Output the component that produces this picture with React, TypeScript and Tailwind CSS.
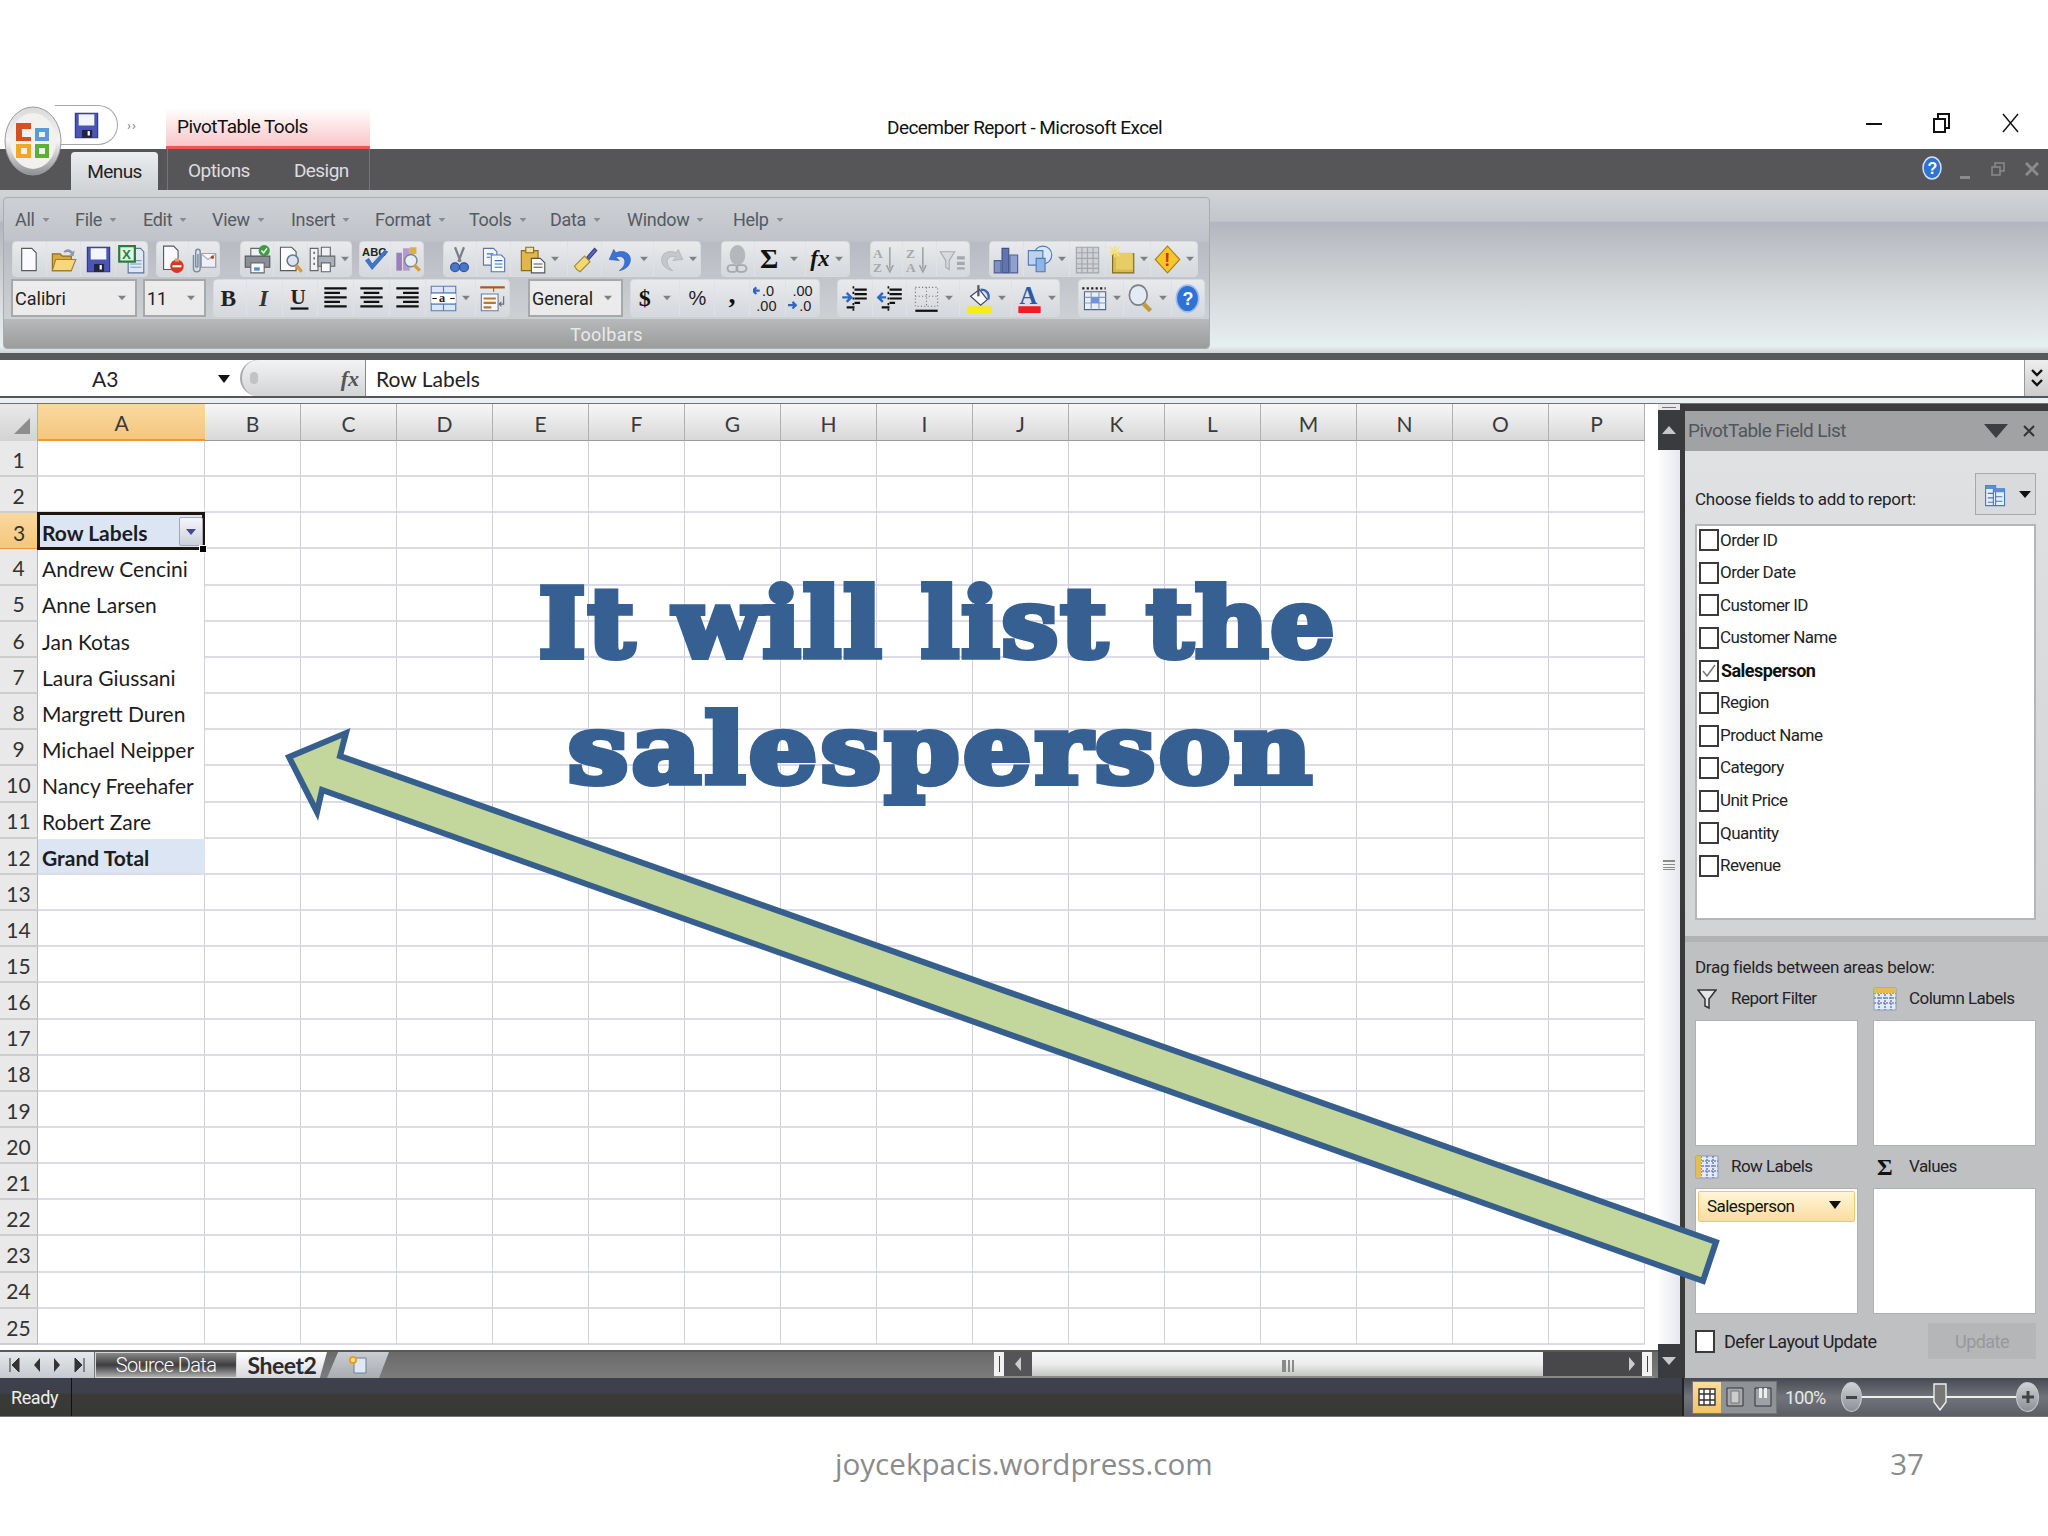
import type { ReactNode } from "react";

const Caret = ({ color = "#7d8085" }: { color?: string }) => (
  <svg width="10" height="6" viewBox="0 0 10 6" className="shrink-0">
    <path d="M0.5 0.5h9L5 5.5z" fill={color} stroke="#e8e8e8" strokeWidth="0.5" />
  </svg>
);

const S = ({ children }: { children: ReactNode }) => (
  <svg width="29" height="29" viewBox="0 0 26 26" className="shrink-0">
    {children}
  </svg>
);

const Doc = ({ x = 6, y = 3, w = 13, h = 20 }: { x?: number; y?: number; w?: number; h?: number }) => (
  <path d={`M${x} ${y}h${w - 4}l4 4v${h - 4}h-${w}z`} fill="#fbfbfd" stroke="#56595e" strokeWidth="1" />
);

const Lines = ({ d }: { d: string }) => <path d={d} stroke="#111" strokeWidth="2" fill="none" />;

const icons: Record<string, ReactNode> = {
  new: <Doc />,
  open: (
    <>
      <path d="M3 8h7l2 2h8v13H3z" fill="#d9a93c" stroke="#8a6a1e" />
      <path d="M6 13h18l-4 10H3z" fill="#f7d77e" stroke="#a47f26" />
      <path d="M13 6c2-3 6-3 8 0l2-1-1 5-4-1 2-1c-2-2-4-2-6-1z" fill="#8c97a8" />
    </>
  ),
  save: (
    <>
      <path d="M3 2h20v22H3z" fill="#4a55b5" stroke="#2c3380" />
      <path d="M6 3h14v10H6z" fill="#f4f5fb" />
      <path d="M9 17h9v7H9z" fill="#20243e" />
      <path d="M14 18h2v4h-2z" fill="#fff" />
    </>
  ),
  excel: (
    <>
      <path d="M10 3h11l3 3v19H10z" fill="#dfe8f5" stroke="#5674a5" />
      <path d="M12 14h10M12 17h10M12 20h10" stroke="#7f9bc6" />
      <path d="M2 1h14v14H2z" fill="#e7f4e4" stroke="#23803a" strokeWidth="2" />
      <text x="4.5" y="12.5" fontFamily="Liberation Sans" fontWeight="700" fontSize="12" fill="#1c8a3a">X</text>
    </>
  ),
  perm: (
    <>
      <Doc x={5} y={1} h={21} />
      <circle cx="17" cy="19" r="6" fill="#d23a22" />
      <path d="M13 18h8v2h-8z" fill="#fff" />
      <path d="M15 12h4v3h-4z" fill="#d0a078" />
    </>
  ),
  attach: (
    <>
      <path d="M11 8h13v12H11z" fill="#eef0f7" stroke="#8a90a4" />
      <path d="M11 8l6 5 7-5" fill="#f7f7fb" stroke="#a7acbb" />
      <circle cx="21" cy="11" r="1.5" fill="#d23a22" />
      <path d="M4 9v12c0 4 6 4 6 0V6c0-3-4-3-4 0v13c0 1 2 1 2 0V8" fill="none" stroke="#7d8aa0" strokeWidth="1.3" />
    </>
  ),
  print: (
    <>
      <path d="M7 3h11v8H7z" fill="#eef1f7" stroke="#666" />
      <path d="M2 10h22v10H2z" fill="#8a8f9a" stroke="#555" />
      <path d="M7 16h12v9H7z" fill="#f7f9fc" stroke="#666" />
      <path d="M10 20h5v3h-5z" fill="#4f8fd0" />
      <circle cx="19" cy="5" r="5" fill="#3f9a45" />
      <path d="M16.5 5l2 2 3-4" stroke="#fff" strokeWidth="1.3" fill="none" />
    </>
  ),
  preview: (
    <>
      <Doc x={4} y={2} w={14} h={21} />
      <circle cx="15" cy="14" r="5" fill="#d8e4f2" stroke="#6b7688" strokeWidth="1.4" />
      <path d="M18 18l5 6" stroke="#d89a3a" strokeWidth="3" />
    </>
  ),
  printdrop: (
    <>
      <path d="M2 3h7v20H2z" fill="#f0f2f6" stroke="#666" />
      <path d="M5 7h1M5 12h1M5 17h1" stroke="#333" strokeWidth="2" />
      <path d="M12 2h8v9h-8z" fill="#eef1f7" stroke="#666" />
      <path d="M9 10h15v9H9z" fill="#a8b0bc" stroke="#666" />
      <path d="M12 16h8v8h-8z" fill="#f7f9fc" stroke="#666" />
    </>
  ),
  spell: (
    <>
      <text x="1" y="10" fontFamily="Liberation Sans" fontWeight="700" fontSize="10" fill="#222">ABC</text>
      <path d="M4 14l6 8L24 6l-3-1-11 12-3-5z" fill="#3c76cf" stroke="#204a96" strokeWidth="0.5" />
    </>
  ),
  research: (
    <>
      <path d="M3 7h5v16H3z" fill="#9a7fc0" />
      <path d="M9 3h6v20H9z" fill="#b39ad0" />
      <path d="M15 2h6v6h-6z" fill="#d8b04c" />
      <circle cx="16" cy="14" r="5.5" fill="#e5edf6" stroke="#80848c" strokeWidth="1.3" />
      <path d="M19 18l5 5" stroke="#d89a3a" strokeWidth="3" />
    </>
  ),
  cut: (
    <>
      <path d="M9 2l5 13M17 2l-5 13" stroke="#7b7f88" strokeWidth="2" />
      <circle cx="9" cy="20" r="4" fill="#4a76c8" stroke="#2b4d96" />
      <circle cx="17" cy="20" r="4" fill="#4a76c8" stroke="#2b4d96" />
    </>
  ),
  copy: (
    <>
      <path d="M4 3h9l3 3v12H4z" fill="#f3f6fb" stroke="#5877a8" />
      <path d="M11 9h9l3 3v12H11z" fill="#f8fafd" stroke="#5877a8" />
      <path d="M7 8h6M7 11h3M14 14h7M14 17h7M14 20h7" stroke="#3f6fc0" />
    </>
  ),
  paste: (
    <>
      <path d="M3 5h15v18H3z" fill="#e3b64a" stroke="#8a6a1e" />
      <path d="M7 2h7v5H7z" fill="#f3e2a8" stroke="#8a6a1e" />
      <path d="M12 12h8l4 4v9H12z" fill="#f7f9fc" stroke="#555" />
      <path d="M14 17h8M14 20h8" stroke="#555" />
    </>
  ),
  brush: (
    <>
      <path d="M15 11l7-8 2 2-7 8z" fill="#5b68b8" stroke="#363f85" />
      <path d="M4 19l9-9 5 5-9 9c-2-1-4-3-5-5z" fill="#f4d872" stroke="#a08a3a" />
    </>
  ),
  undo: (
    <path d="M6 4L2 13l9 1-3-3c4-2 8 0 8 4 0 3-2 6-5 8 6-1 10-5 10-10 0-6-7-9-13-6z" fill="#3a73d6" stroke="#24509e" strokeWidth="0.5" />
  ),
  redo: (
    <path d="M20 4l4 9-9 1 3-3c-4-2-8 0-8 4 0 3 2 6 5 8-6-1-10-5-10-10 0-6 7-9 13-6z" fill="#c4c8cc" stroke="#a3a7ab" strokeWidth="0.5" />
  ),
  link: (
    <>
      <ellipse cx="13" cy="9" rx="7" ry="9" fill="#b4b7bb" />
      <rect x="4" y="18" width="9" height="6" rx="3" fill="none" stroke="#a6a9ad" strokeWidth="1.6" />
      <rect x="12" y="18" width="9" height="6" rx="3" fill="none" stroke="#a6a9ad" strokeWidth="1.6" />
    </>
  ),
  az: (
    <>
      <text x="1" y="12" fontFamily="Liberation Serif" fontSize="12" fontWeight="700" fill="#a5a8ad">A</text>
      <text x="1" y="24" fontFamily="Liberation Serif" fontSize="12" fontWeight="700" fill="#a5a8ad">Z</text>
      <path d="M16 2v19M13 18l3 6 3-6" stroke="#9a9da2" fill="none" strokeWidth="1.3" />
    </>
  ),
  za: (
    <>
      <text x="1" y="12" fontFamily="Liberation Serif" fontSize="12" fontWeight="700" fill="#a5a8ad">Z</text>
      <text x="1" y="24" fontFamily="Liberation Serif" fontSize="12" fontWeight="700" fill="#a5a8ad">A</text>
      <path d="M16 2v19M13 18l3 6 3-6" stroke="#9a9da2" fill="none" strokeWidth="1.3" />
    </>
  ),
  filter: (
    <>
      <path d="M2 6h13l-5 8v8l-3-2v-6z" fill="#d8dadd" stroke="#a7aaae" />
      <path d="M17 10h7v3h-7zM17 15h7v3h-7zM17 20h7v2h-7z" fill="#a5a8ac" />
    </>
  ),
  chart: (
    <>
      <path d="M2 14h6v11H2z" fill="#7f90c2" stroke="#4e5e96" />
      <path d="M9 3h6v22H9z" fill="#5f74b0" stroke="#3f4f88" />
      <path d="M16 9h7v16h-7z" fill="#8fa0cf" stroke="#4e5e96" />
    </>
  ),
  shapes: (
    <>
      <circle cx="16" cy="9" r="8" fill="#d9e7f7" stroke="#4d79b8" />
      <path d="M3 5h13v13H3z" fill="#bcd3f0" stroke="#4d79b8" />
      <path d="M10 12h8v12h-8z" fill="#8fb4e6" stroke="#4d79b8" />
    </>
  ),
  grid: (
    <path d="M3 2h20v23H3zM3 7h20M3 12h20M3 17h20M3 21h20M8 2v23M13 2v23M18 2v23" fill="#cfd1d4" stroke="#a3a6aa" />
  ),
  note: (
    <>
      <path d="M5 8h19v17H5z" fill="#d8b951" stroke="#7e6a24" />
      <path d="M8 7h15v15H8z" fill="#e8cd66" />
      <path d="M7 1v10M2 6h10M3 2l8 8M11 2l-8 8" stroke="#f7e26e" strokeWidth="1.4" />
    </>
  ),
  alert: (
    <>
      <path d="M13 1l11 12-11 12L2 13z" fill="#f6c62a" stroke="#a7821c" />
      <text x="10" y="19" fontFamily="Liberation Sans" fontWeight="700" fontSize="16" fill="#cf2c1a">!</text>
    </>
  ),
  bold: <text x="5" y="20" fontFamily="Liberation Serif" fontWeight="700" fontSize="21" fill="#222">B</text>,
  italic: <text x="8" y="20" fontFamily="Liberation Serif" fontWeight="700" fontStyle="italic" fontSize="21" fill="#333">I</text>,
  underline: (
    <>
      <text x="5" y="18" fontFamily="Liberation Serif" fontWeight="700" fontSize="19" fill="#222">U</text>
      <path d="M5 22h16" stroke="#111" strokeWidth="2" />
    </>
  ),
  left: <Lines d="M3 4h20M3 8h14M3 12h20M3 16h14M3 20h20" />,
  center: <Lines d="M3 4h20M6 8h14M3 12h20M6 16h14M3 20h20" />,
  right: <Lines d="M3 4h20M9 8h14M3 12h20M9 16h14M3 20h20" />,
  merge: (
    <>
      <path d="M2 2h22v22H2z" fill="#dbe6f6" stroke="#5c7cae" />
      <path d="M2 8h22M2 18h22M13 2v6M13 18v6" stroke="#5c7cae" />
      <path d="M2 9h22v8H2z" fill="#fff" />
      <text x="9" y="16.5" fontFamily="Liberation Serif" fontWeight="700" fontSize="11" fill="#222">a</text>
      <path d="M3 13h4M23 13h-4" stroke="#111" />
    </>
  ),
  wrap: (
    <>
      <path d="M2 3h22" stroke="#a85a20" strokeWidth="2" />
      <path d="M14 3v4" stroke="#a85a20" />
      <path d="M3 9h15v15H3z" fill="#f5f7fb" stroke="#6d7d98" />
      <path d="M5 13h11M5 17h11M5 21h7" stroke="#b8792d" strokeWidth="2" />
      <path d="M23 11v7h-3M21 16l-2 2 2 2" stroke="#667" fill="none" />
    </>
  ),
  inc: (
    <>
      <path d="M1 6h5M3 3L0 6l3 3" stroke="#3465c0" strokeWidth="2" fill="none" />
      <text x="8" y="11" fontFamily="Liberation Sans" fontSize="13" fill="#222">.0</text>
      <text x="3" y="24" fontFamily="Liberation Sans" fontSize="13" fill="#222">.00</text>
    </>
  ),
  dec: (
    <>
      <text x="4" y="11" fontFamily="Liberation Sans" fontSize="13" fill="#222">.00</text>
      <path d="M0 19h6M4 16l3 3-3 3" stroke="#3465c0" strokeWidth="2" fill="none" />
      <text x="10" y="24" fontFamily="Liberation Sans" fontSize="13" fill="#222">.0</text>
    </>
  ),
  indent: (
    <>
      <path d="M12 2v22" stroke="#111" strokeDasharray="2 3" strokeWidth="1.5" />
      <path d="M13 5h11M13 9h11M13 13h11M13 17h5M6 21h7" stroke="#111" strokeWidth="2" />
      <path d="M2 12h7M6 8l4 4-4 4" stroke="#3465c0" strokeWidth="2.2" fill="none" />
    </>
  ),
  outdent: (
    <>
      <path d="M12 2v22" stroke="#111" strokeDasharray="2 3" strokeWidth="1.5" />
      <path d="M13 5h11M13 9h11M13 13h11M13 17h5M6 21h7" stroke="#111" strokeWidth="2" />
      <path d="M10 12H3M7 8l-4 4 4 4" stroke="#3465c0" strokeWidth="2.2" fill="none" />
    </>
  ),
  border: (
    <>
      <path d="M3 3h20v17H3zM13 3v17M3 11h20" fill="none" stroke="#777" strokeDasharray="1 2" />
      <path d="M3 24h20" stroke="#111" strokeWidth="2" />
    </>
  ),
  fill: (
    <>
      <path d="M5 11l8-6 7 9-6 5z" fill="#f5f7fa" stroke="#445" />
      <path d="M12 1v10" stroke="#556" strokeWidth="2" />
      <path d="M14 5c6 0 8 4 7 9" stroke="#3465c0" strokeWidth="2" fill="none" />
      <path d="M2 20h22v6H2z" fill="#f7ec13" />
    </>
  ),
  color: (
    <>
      <text x="4" y="18" fontFamily="Liberation Serif" fontWeight="700" fontSize="22" fill="#2d5aa8">A</text>
      <path d="M3 20h20v6H3z" fill="#ee1c25" />
    </>
  ),
  view: (
    <>
      <path d="M4 7h19v16H4z" fill="#e8eef8" stroke="#556480" />
      <path d="M4 12h19M4 17h19M10 7v16M17 7v16" stroke="#8a9ab8" />
      <path d="M10 12h7v5h-7z" fill="#6d94d8" />
      <path d="M2 4h21" stroke="#222" strokeDasharray="2 2" strokeWidth="2" />
    </>
  ),
  zoom: (
    <>
      <ellipse cx="11" cy="10" rx="8" ry="9" fill="#e4eaf2" stroke="#7c8088" strokeWidth="1.5" />
      <path d="M16 18l6 6" stroke="#c49a3a" strokeWidth="4" />
    </>
  ),
  help: (
    <>
      <ellipse cx="13" cy="13" rx="10" ry="12" fill="#2f72d4" stroke="#9dbdea" strokeWidth="1.5" />
      <text x="8.5" y="19" fontFamily="Liberation Sans" fontWeight="700" fontSize="16" fill="#fff">?</text>
    </>
  ),
};

type BtnProps = { w: string; name?: string; caret?: boolean; text?: ReactNode };

const Btn = ({ w, name, caret, text }: BtnProps) => (
  <div className={`${w} h-full flex items-center justify-center gap-[3px] border-r border-[#dfe1e4] last:border-r-0`}>
    {text ? text : name ? <S>{icons[name]}</S> : null}
    {caret && <Caret />}
  </div>
);

const Group = ({ className, children }: { className?: string; children: ReactNode }) => (
  <div className={`flex h-full rounded-[4px] border border-[#d8dadd] bg-linear-to-b from-[#e8eaec] to-[#d5d8dc] ${className ?? ""}`}>
    {children}
  </div>
);

const Combo = ({ className, label }: { className: string; label: string }) => (
  <div className={`flex items-center justify-between h-full pl-[2px] pr-[8px] border-2 border-[#a6a8aa] bg-[#ebebeb] text-[18px] text-[#222] ${className}`}>
    <span>{label}</span>
    <Caret />
  </div>
);

const menus = [
  { label: "All", w: "w-[60px]" },
  { label: "File", w: "w-[68px]" },
  { label: "Edit", w: "w-[69px]" },
  { label: "View", w: "w-[79px]" },
  { label: "Insert", w: "w-[84px]" },
  { label: "Format", w: "w-[94px]" },
  { label: "Tools", w: "w-[81px]" },
  { label: "Data", w: "w-[77px]" },
  { label: "Window", w: "w-[106px]" },
  { label: "Help", w: "w-[60px]" },
];

function Ribbon() {
  return (
    <div className="h-[163px] pt-[7px] bg-[linear-gradient(#d2d4d7_0%,#c2c5cb_19%,#b3b6c0_20%,#c8cbce_46%,#d8dcde_68%,#e7eff1_96%,#cfd2d4_100%)]">
      <div className="flex flex-col w-[1207px] h-[152px] ml-[3px] rounded-[4px] border border-[#a9abae] bg-[linear-gradient(#cdd0d3_0%,#c0c3c9_28%,#b8bbc2_30%,#cdd0d3_80%)] overflow-hidden">
        <div className="flex items-center h-[43px] pl-[11px] text-[18px] tracking-[-0.3px] text-[#555a63]">
          {menus.map((m) => (
            <div key={m.label} className={`flex items-center gap-[6px] ${m.w}`}>
              <span>{m.label}</span>
              <Caret color="#8a8d92" />
            </div>
          ))}
        </div>
        <div className="flex h-[36px] pl-[8px]">
          <Group className="w-[136px]">
            <Btn w="w-[34px]" name="new" />
            <Btn w="w-[35px]" name="open" />
            <Btn w="w-[36px]" name="save" />
            <Btn w="w-[31px]" name="excel" />
          </Group>
          <Group className="ml-[8px] w-[64px]">
            <Btn w="w-[33px]" name="perm" />
            <Btn w="w-[31px]" name="attach" />
          </Group>
          <Group className="ml-[20px] w-[112px]">
            <Btn w="w-[34px]" name="print" />
            <Btn w="w-[34px]" name="preview" />
            <Btn w="w-[44px]" name="printdrop" caret />
          </Group>
          <Group className="ml-[7px] w-[65px]">
            <Btn w="w-[32px]" name="spell" />
            <Btn w="w-[33px]" name="research" />
          </Group>
          <Group className="ml-[19px] w-[258px]">
            <Btn w="w-[33px]" name="cut" />
            <Btn w="w-[35px]" name="copy" />
            <Btn w="w-[57px]" name="paste" caret />
            <Btn w="w-[34px]" name="brush" />
            <Btn w="w-[53px]" name="undo" caret />
            <Btn w="w-[46px]" name="redo" caret />
          </Group>
          <Group className="ml-[20px] w-[129px]">
            <Btn w="w-[33px]" name="link" />
            <Btn
              w="w-[52px]"
              caret
              text={<span className="font-['Liberation_Serif'] font-bold text-[28px] leading-[32px] text-[#111] mr-[8px]">Σ</span>}
            />
            <Btn
              w="w-[44px]"
              caret
              text={<span className="font-['Liberation_Serif'] font-bold italic text-[23px] leading-[30px] pr-[2px] text-[#111]">fx</span>}
            />
          </Group>
          <Group className="ml-[20px] w-[100px]">
            <Btn w="w-[33px]" name="az" />
            <Btn w="w-[34px]" name="za" />
            <Btn w="w-[33px]" name="filter" />
          </Group>
          <Group className="ml-[19px] w-[209px]">
            <Btn w="w-[34px]" name="chart" />
            <Btn w="w-[47px]" name="shapes" caret />
            <Btn w="w-[36px]" name="grid" />
            <Btn w="w-[46px]" name="note" caret />
            <Btn w="w-[46px]" name="alert" caret />
          </Group>
        </div>
        <div className="flex h-[40px] pl-[7px] pt-[2px]">
          <Combo className="w-[126px]" label="Calibri" />
          <Combo className="ml-[6px] w-[63px]" label="11" />
          <Group className="ml-[7px] w-[297px]">
            <Btn w="w-[33px]" name="bold" />
            <Btn w="w-[36px]" name="italic" />
            <Btn w="w-[36px]" name="underline" />
            <Btn w="w-[36px]" name="left" />
            <Btn w="w-[36px]" name="center" />
            <Btn w="w-[36px]" name="right" />
            <Btn w="w-[51px]" name="merge" caret />
            <Btn w="w-[33px]" name="wrap" />
          </Group>
          <Combo className="ml-[18px] w-[95px]" label="General" />
          <Group className="ml-[7px] w-[190px]">
            <Btn w="w-[50px]" caret text={<span className="font-['Liberation_Serif'] font-bold text-[24px] text-[#111] mr-[8px]">$</span>} />
            <Btn w="w-[35px]" text={<span className="font-['Liberation_Sans'] text-[20px] text-[#222]">%</span>} />
            <Btn w="w-[35px]" text={<span className="font-['Liberation_Serif'] font-bold text-[28px] leading-none text-[#111] -mt-[8px]">,</span>} />
            <Btn w="w-[37px]" name="inc" />
            <Btn w="w-[33px]" name="dec" />
          </Group>
          <Group className="ml-[17px] w-[223px]">
            <Btn w="w-[35px]" name="indent" />
            <Btn w="w-[35px]" name="outdent" />
            <Btn w="w-[53px]" name="border" caret />
            <Btn w="w-[53px]" name="fill" caret />
            <Btn w="w-[47px]" name="color" caret />
          </Group>
          <Group className="ml-[18px] w-[127px]">
            <Btn w="w-[46px]" name="view" caret />
            <Btn w="w-[48px]" name="zoom" caret />
            <Btn w="w-[33px]" name="help" />
          </Group>
        </div>
        <div className="flex-1 mt-[2px] pt-[2px] flex items-center justify-center bg-linear-to-b from-[#b7b9ba] to-[#9b9c9c] text-[#e9e9e9] text-[18px] tracking-[0.3px]">
          Toolbars
        </div>
      </div>
    </div>
  );
}

const columns = ["B", "C", "D", "E", "F", "G", "H", "I", "J", "K", "L", "M", "N", "O", "P"];
const names = ["Andrew Cencini", "Anne Larsen", "Jan Kotas", "Laura Giussani", "Margrett Duren", "Michael Neipper", "Nancy Freehafer", "Robert Zare"];
const rows = Array.from({ length: 25 }, (_, i) => i + 1);

function Cell({ row }: { row: number }) {
  if (row === 3) {
    return (
      <div className="relative w-[167px] h-full pt-[2px] bg-[#dbe5f3] font-bold flex items-center pl-[4px] border-r border-[#cdd1df]">
        Row Labels
        <div className="absolute inset-[-1px] border-[3px] border-[#1e160c]" />
        <div className="absolute left-[141px] top-[4px] w-[24px] h-[29px] rounded-[2px] border border-[#a4a8b4] bg-linear-to-b from-[#f5f6f9] to-[#ccd1dc] flex items-center justify-center">
          <svg width="12" height="8" viewBox="0 0 12 8"><path d="M1 1h10L6 7z" fill="#44489a" /></svg>
        </div>
        <div className="absolute left-[161px] top-[32px] w-[8px] h-[8px] bg-black border border-white" />
      </div>
    );
  }
  if (row >= 4 && row <= 11) {
    return <div className="w-[167px] h-full pt-[3px] flex items-center pl-[4px] bg-white border-r border-[#cdd1df]">{names[row - 4]}</div>;
  }
  if (row === 12) {
    return <div className="w-[167px] h-full pt-[3px] flex items-center pl-[4px] bg-[#dbe5f3] font-bold border-b-2 border-[#dcdce8]">Grand Total</div>;
  }
  return <div className="w-[167px] h-full border-r border-r-[#cdd1df] border-b-2 border-b-[#dcdce8]" />;
}

function Sheet() {
  return (
    <div className="flex-1 overflow-hidden bg-white font-['Lato',sans-serif] text-[#1c1c22] text-[21px]">
      <div className="flex h-[37px] text-[#3a3a3e]">
        <div className="relative w-[38px] h-full bg-linear-to-b from-[#e9e9e9] to-[#d3d3d3] border-r border-[#b0b0b0]">
          <svg width="18" height="18" viewBox="0 0 18 18" className="absolute right-[6px] bottom-[6px]"><path d="M17 1v16H1z" fill="#8d8d8d" /></svg>
        </div>
        <div className="w-[167px] h-full pt-[3px] flex items-center justify-center bg-linear-to-b from-[#f9d99f] to-[#f5c67d] border-b-2 border-[#f29536]">A</div>
        {columns.map((c) => (
          <div key={c} className="w-[96px] h-full pt-[3px] flex items-center justify-center bg-linear-to-b from-[#f7f7f7] to-[#d8d8d8] border-r border-[#b0b0b0] border-b border-b-[#9a9a9a]">
            {c}
          </div>
        ))}
      </div>
      {rows.map((r) => (
        <div key={r} className="flex h-[36.16px]">
          <div
            className={
              r === 3
                ? "w-[38px] h-full pt-[3px] flex items-center justify-center text-[#333] bg-linear-to-b from-[#f9d99f] to-[#f5c67d] border-b border-[#f29536]"
                : "w-[38px] h-full pt-[3px] flex items-center justify-center text-[#333] bg-[#e9e9e9] border-r border-[#b8b8b8] border-b-2 border-b-[#cdcdcd]"
            }
          >
            {r}
          </div>
          <Cell row={r} />
          {columns.map((c) => (
            <div key={c} className="w-[96px] h-full border-r border-r-[#cdd1df] border-b-2 border-b-[#dcdce8]" />
          ))}
        </div>
      ))}
    </div>
  );
}

function SheetTabs() {
  return (
    <div className="flex h-[28px] bg-linear-to-b from-[#6a6a6a] to-[#7c7c7c] border-t-2 border-[#58585a]">
      <div className="flex items-center justify-around w-[94px] px-[2px] bg-linear-to-b from-[#e6e8ec] to-[#c6c9cf] text-[#333]">
        <svg width="12" height="16" viewBox="0 0 12 16"><path d="M2 1v14M11 1v14L4 8z" fill="#333" stroke="#333" /></svg>
        <svg width="8" height="16" viewBox="0 0 8 16"><path d="M7 1v14L1 8z" fill="#333" /></svg>
        <svg width="8" height="16" viewBox="0 0 8 16"><path d="M1 1v14l6-7z" fill="#333" /></svg>
        <svg width="12" height="16" viewBox="0 0 12 16"><path d="M10 1v14M1 1v14l7-7z" fill="#333" stroke="#333" /></svg>
      </div>
      <div className="flex items-center justify-center ml-[1px] w-[142px] text-[20px] tracking-[-0.6px] text-white bg-linear-to-b from-[#8a8a8a] via-[#3e3e40] to-[#b0b0b0] border border-[#d6d6d6] font-['Roboto',sans-serif] font-light">
        Source Data
      </div>
      <div className="flex items-center justify-center w-[90px] text-[23px] font-bold text-[#2a2a30] bg-linear-to-b from-white to-[#d5d8de] [clip-path:polygon(0_0,100%_0,92%_100%,0_100%)] tracking-[-0.5px] font-['Lato',sans-serif]">
        Sheet2
      </div>
      <div className="flex items-center justify-center w-[62px] bg-linear-to-b from-[#c9ccd1] to-[#a9acb0] [clip-path:polygon(18%_0,100%_0,84%_100%,0_100%)]">
        <svg width="24" height="24" viewBox="0 0 24 24">
          <path d="M8 5h12v15H8z" fill="#dfe8f5" stroke="#6f7f9a" />
          <circle cx="7" cy="7" r="4" fill="#f09a1e" />
          <circle cx="7" cy="7" r="2" fill="#fde9a9" />
        </svg>
      </div>
      <div className="w-[605px]" />
      <div className="flex items-center h-full w-[660px] border-b-2 border-[#8a8a8a]">
        <div className="flex items-center justify-center w-[10px] h-full bg-[#f2f2f2] text-[#444]">
          <div className="w-[1px] h-[16px] bg-[#444]" />
        </div>
        <div className="flex items-center justify-center w-[28px] h-full bg-[#555558]">
          <svg width="8" height="16" viewBox="0 0 8 16"><path d="M7 1v14L1 8z" fill="#ccc" /></svg>
        </div>
        <div className="flex items-center justify-center w-[511px] h-full bg-linear-to-b from-[#f7f8f8] via-[#ecedec] to-[#c4c6c4]">
          <div className="w-[12px] h-[12px] mt-[4px] border-x-2 border-[#8a8a8a] bg-[linear-gradient(90deg,#8a8a8a_2px,transparent_2px)] bg-[length:4px_4px]" />
        </div>
        <div className="flex items-center justify-end pr-[6px] w-[99px] h-full bg-[#48484b]">
          <svg width="8" height="16" viewBox="0 0 8 16"><path d="M1 1v14l6-7z" fill="#ccc" /></svg>
        </div>
        <div className="flex items-center justify-center w-[10px] h-full bg-[#f2f2f2]">
          <div className="w-[1px] h-[16px] bg-[#444]" />
        </div>
      </div>
    </div>
  );
}

function VScroll() {
  return (
    <div className="flex flex-col items-center w-[22px] bg-[#3a3b3e] border-r-[5px] border-[#3a3a3a] box-content">
      <div className="w-full h-[6px] bg-[#e8e8e8] flex items-center justify-center">
        <div className="w-[14px] h-[1px] bg-[#777]" />
      </div>
      <div className="h-[40px] flex items-center">
        <svg width="14" height="8" viewBox="0 0 14 8"><path d="M0 8h14L7 0z" fill="#c8c8c8" /></svg>
      </div>
      <div className="flex-1 w-full pb-[64px] flex items-center justify-center bg-linear-to-r from-[#fdfdfd] to-[#e6e8ee]">
        <div className="w-[12px] h-[10px] border-y border-[#8a8a8a] bg-[linear-gradient(#8a8a8a_1px,transparent_1px)] bg-[length:4px_3px]" />
      </div>
      <div className="h-[34px] flex items-center">
        <svg width="14" height="8" viewBox="0 0 14 8"><path d="M0 0h14L7 8z" fill="#c8c8c8" /></svg>
      </div>
    </div>
  );
}

const fields = ["Order ID", "Order Date", "Customer ID", "Customer Name", "Salesperson", "Region", "Product Name", "Category", "Unit Price", "Quantity", "Revenue"];

function AreaLabel({ icon, label }: { icon: ReactNode; label: string }) {
  return (
    <div className="flex items-center">
      <div className="flex items-center justify-center w-[37px] -ml-[1px] pr-[12px]">{icon}</div>
      <span>{label}</span>
    </div>
  );
}

const GridIcon = ({ strip }: { strip: string }) => (
  <svg width="24" height="24" viewBox="0 0 24 24">
    <path d="M1 1h22v22H1z" fill="#e3e9f7" stroke="#8a9ab8" />
    <path d="M1 6h22M1 11h22M1 16h22M6 1v22M12 1v22M18 1v22" stroke="#7486b8" strokeWidth="1.6" strokeDasharray="2 1" />
    <path d={strip} fill="#e0bf50" />
  </svg>
);

function FieldPanel() {
  return (
    <div className="flex flex-col w-[363px] font-['Roboto',sans-serif] text-[17px] tracking-[-0.55px] text-[#232327] border-t-[7px] border-[#3c3c3e]">
      <div className="flex items-center justify-between h-[40px] pl-[3px] pr-[12px] bg-[#a0a2a4] text-[#52565a] text-[19px]">
        <span>PivotTable Field List</span>
        <div className="flex items-center gap-[14px]">
          <svg width="24" height="14" viewBox="0 0 24 14"><path d="M0 0h24L12 14z" fill="#3c3e42" /></svg>
          <svg width="14" height="14" viewBox="0 0 14 14"><path d="M2 2l10 10M12 2L2 12" stroke="#333" strokeWidth="2" /></svg>
        </div>
      </div>
      <div className="h-[485px] pl-[10px] pr-[12px] bg-linear-to-b from-[#dfe1e3] to-[#d2d3d4]">
        <div className="flex items-end justify-between h-[73px] pb-[12px]">
          <span className="tracking-[-0.25px]">Choose fields to add to report:</span>
          <div className="flex items-center justify-center gap-[10px] w-[61px] h-[42px] -mb-[3px] border border-[#a6a8ab] bg-[#d9dadc]">
            <S>
              <path d="M5 5h9v18H5zM12 8h10v15H12z" fill="#e5eefa" stroke="#4a78c0" />
              <path d="M5 5h9v3H5zM12 8h10v3H12z" fill="#5a8ed8" />
              <path d="M7 12h5M7 16h5M7 20h5M14 15h6M14 19h6" stroke="#4a78c0" />
            </S>
            <svg width="12" height="7" viewBox="0 0 12 7"><path d="M0 0h12L6 7z" fill="#111" /></svg>
          </div>
        </div>
        <div className="h-[396px] pl-[2px] bg-white border-2 border-[#b4b6b8]">
          <div className="-mt-[2px]">
            {fields.map((f) => (
              <div key={f} className="flex items-center h-[32.57px] gap-[1px]">
                <div className="flex items-center justify-center w-[20px] h-[22px] bg-white border-2 border-[#3a3a3c]">
                  {f === "Salesperson" && (
                    <svg width="16" height="16" viewBox="0 0 16 16"><path d="M2 8l4 5 8-11" fill="none" stroke="#777" strokeWidth="1.5" /></svg>
                  )}
                </div>
                <span className={f === "Salesperson" ? "font-bold text-[18px] text-[#111] ml-[1px]" : ""}>{f}</span>
              </div>
            ))}
          </div>
        </div>
      </div>
      <div className="h-[6px] bg-[#b1b2b4]" />
      <div className="flex-1 pl-[10px] pr-[12px] bg-[#bfc0c2]">
        <div className="flex items-center h-[40px] pt-[12px] tracking-[-0.3px]">Drag fields between areas below:</div>
        <div className="grid grid-cols-[163px_163px] gap-x-[15px]">
          <div className="h-[38px] pb-[4px] flex">
            <AreaLabel
              label="Report Filter"
              icon={
                <svg width="20" height="22" viewBox="0 0 20 22"><path d="M1 2h18l-7 9v9l-4-2v-7z" fill="#e5e6e8" stroke="#333" strokeWidth="1.5" /></svg>
              }
            />
          </div>
          <div className="h-[38px] pb-[4px] flex">
            <AreaLabel label="Column Labels" icon={<GridIcon strip="M1 1h22v5H1z" />} />
          </div>
          <div className="h-[126px] bg-white border border-[#aeb0b2]" />
          <div className="h-[126px] bg-white border border-[#aeb0b2]" />
          <div className="h-[42px] flex">
            <AreaLabel label="Row Labels" icon={<GridIcon strip="M1 1h5v22H1z" />} />
          </div>
          <div className="h-[42px] flex">
            <AreaLabel label="Values" icon={<span className="font-['Liberation_Serif'] font-bold text-[24px] text-[#111]">Σ</span>} />
          </div>
          <div className="h-[126px] p-[2px] bg-white border border-[#aeb0b2]">
            <div className="flex items-center justify-between h-[31px] pl-[8px] pr-[13px] rounded-[2px] border border-[#f4c56f] bg-linear-to-b from-[#fff5d9] to-[#fbdc9e] text-[#111]">
              <span>Salesperson</span>
              <svg width="12" height="8" viewBox="0 0 12 8" className="-mt-[4px]"><path d="M0 0h12L6 8z" fill="#111" /></svg>
            </div>
          </div>
          <div className="h-[126px] bg-white border border-[#aeb0b2]" />
        </div>
        <div className="flex items-center justify-between h-[36px] mt-[9px]">
          <div className="flex items-center gap-[9px]">
            <div className="w-[20px] h-[23px] bg-white border-2 border-[#3a3a3c]" />
            <span className="text-[18px]">Defer Layout Update</span>
          </div>
          <div className="flex items-center justify-center w-[108px] h-[36px] bg-[#b5b6b8] text-[#98999b] text-[18px]">Update</div>
        </div>
      </div>
    </div>
  );
}

function StatusBar() {
  return (
    <div className="flex h-[39px] border-b border-[#777]">
      <div className="flex flex-1 w-[1682px] bg-[linear-gradient(#3e404d_0%,#3e404a_40%,#3a3a38_42%,#383836_100%)] text-[18px] tracking-[-0.4px] text-[#eee] font-['Roboto',sans-serif]">
        <div className="flex items-center w-[72px] pl-[11px] border-r border-[#111]">Ready</div>
      </div>
      <div className="flex items-center w-[366px] pl-[8px] border-l-2 border-[#222] bg-linear-to-b from-[#474a50] via-[#71757b] to-[#5b5f65] font-['Roboto',sans-serif] text-[18px] text-[#e8e8e8] tracking-[-0.8px]">
        <div className="flex h-[33px] border border-[#777]">
          <div className="flex items-center justify-center w-[28px] bg-linear-to-b from-[#f9dd9e] to-[#f3c364]">
            <svg width="18" height="18" viewBox="0 0 18 18"><path d="M1 1h16v16H1zM1 6h16M1 12h16M6 1v16M12 1v16" fill="#fff" stroke="#333" strokeWidth="1.4" /></svg>
          </div>
          <div className="flex items-center justify-center w-[28px] bg-[#8f9398]">
            <svg width="18" height="20" viewBox="0 0 18 20"><path d="M1 1h16v18H1z" fill="#a5a8ad" stroke="#333" /><path d="M5 4h8v12H5z" fill="#ccc" stroke="#777" /></svg>
          </div>
          <div className="flex items-center justify-center w-[27px] bg-[#8f9398]">
            <svg width="18" height="20" viewBox="0 0 18 20"><path d="M1 1h16v18H1z" fill="#9ea1a6" stroke="#333" /><path d="M5 1h3v10H5zM10 1h3v10h-3z" fill="#eee" /></svg>
          </div>
        </div>
        <span className="ml-[8px] w-[42px]">100%</span>
        <div className="relative flex items-center ml-[14px] w-[198px]">
          <div className="absolute left-[14px] right-[14px] h-[2px] bg-[#f0f0f0]" />
          <div className="relative flex items-center justify-center w-[21px] h-[30px] rounded-[50%] border border-[#c9c9c9] bg-linear-to-b from-[#cfd2d6] to-[#8c9096]">
            <div className="w-[11px] h-[3px] bg-[#444]" />
          </div>
          <svg width="14" height="28" viewBox="0 0 14 28" className="absolute left-[92px]"><path d="M1 1h12v18l-6 8-6-8z" fill="#777" stroke="#eee" strokeWidth="1.4" /></svg>
          <div className="relative ml-auto flex items-center justify-center w-[23px] h-[30px] rounded-[50%] border border-[#c9c9c9] bg-linear-to-b from-[#cfd2d6] to-[#8c9096]">
            <svg width="14" height="14" viewBox="0 0 14 14"><path d="M7 1v12M1 7h12" stroke="#444" strokeWidth="3" /></svg>
          </div>
        </div>
      </div>
    </div>
  );
}

export default function App() {
  return (
    <div className="relative w-[2048px] h-[1536px] bg-white overflow-hidden font-['Roboto',sans-serif]">
      {/* title bar */}
      <div className="relative flex items-end h-[59px] mt-[90px] text-[#111] text-[19px] tracking-[-0.55px]">
        <div className="flex items-center w-[63px] h-[40px] ml-[55px] mb-[4px] rounded-r-[20px] border border-[#a4a6a9] border-l-0 justify-center">
          <S>{icons.save}</S>
        </div>
        <span className="w-[14px] mb-[14px] ml-[9px] text-[#777] text-[13px] tracking-[1px]">››</span>
        <div className="flex items-center w-[204px] h-[41px] ml-[25px] pl-[11px] bg-linear-to-b from-white to-[#f8c6c9] border-b-[3px] border-[#f0555c]">
          PivotTable Tools
        </div>
        <span className="absolute left-[887px] top-[24px]">December Report - Microsoft Excel</span>
        <svg width="16" height="2" viewBox="0 0 16 2" className="absolute left-[1866px] top-[33px]"><path d="M0 1h16" stroke="#111" strokeWidth="2" /></svg>
        <svg width="18" height="20" viewBox="0 0 18 20" className="absolute left-[1933px] top-[23px]"><path d="M1 6h11v13H1zM5 6V1h11v14h-4" fill="none" stroke="#111" strokeWidth="2" /></svg>
        <svg width="17" height="20" viewBox="0 0 17 20" className="absolute left-[2002px] top-[23px]"><path d="M1 1l15 18M16 1L1 19" stroke="#111" strokeWidth="1.4" /></svg>
      </div>

      {/* tab bar */}
      <div className="relative flex items-end h-[41px] bg-[#565658] text-[19px] tracking-[-0.55px] text-[#dcdde0]">
        <div className="flex items-center justify-center w-[87px] h-[38px] pt-[3px] ml-[71px] rounded-t-[4px] bg-linear-to-b from-[#eceef0] to-[#cfd3d6] text-[#222]">Menus</div>
        <div className="flex items-center h-[41px] w-[203px] pt-[4px] ml-[9px] border-x border-[#74767a]">
          <span className="ml-[20px]">Options</span>
          <span className="ml-[44px]">Design</span>
        </div>
        <svg width="22" height="24" viewBox="0 0 22 24" className="absolute left-[1921px] top-[7px]">
          <ellipse cx="11" cy="12" rx="9" ry="11" fill="#2f72d4" stroke="#cfe0f7" strokeWidth="1.5" />
          <text x="6.5" y="18" fontFamily="Liberation Sans" fontWeight="700" fontSize="16" fill="#fff">?</text>
        </svg>
        <div className="absolute left-[1960px] top-[27px] w-[10px] h-[3px] bg-[#8b8b8d]" />
        <svg width="14" height="14" viewBox="0 0 14 14" className="absolute left-[1991px] top-[13px]"><path d="M1 5h8v8H1zM4 5V1h9v8H9" fill="none" stroke="#8b8b8d" strokeWidth="1.5" /></svg>
        <svg width="14" height="14" viewBox="0 0 14 14" className="absolute left-[2025px] top-[13px]"><path d="M1 1l12 12M13 1L1 13" stroke="#8b8b8d" strokeWidth="3" /></svg>
      </div>

      {/* office button */}
      <svg width="58" height="70" viewBox="0 0 58 70" className="absolute left-[4px] top-[106px] z-10">
        <defs>
          <linearGradient id="ring" x1="0" y1="0" x2="0" y2="1">
            <stop offset="0" stopColor="#d8dadc" />
            <stop offset="0.5" stopColor="#f4f4f4" />
            <stop offset="1" stopColor="#8e9094" />
          </linearGradient>
        </defs>
        <ellipse cx="29" cy="35" rx="28" ry="34" fill="url(#ring)" stroke="#9a9a9a" />
        <ellipse cx="29" cy="35" rx="23" ry="28" fill="#f2f1ee" />
        <path d="M12 17h15v6h-9v8h9v4H12z" fill="#d8501c" />
        <path d="M31 22h14v13H31z" fill="#5b9bd8" />
        <path d="M35 26h6v5h-6z" fill="#f2f1ee" />
        <path d="M12 38h15v14H12z" fill="#f0a628" />
        <path d="M17 42h6v6h-6z" fill="#f2f1ee" />
        <path d="M31 38h14v14H31z" fill="#5fae3c" />
        <path d="M35 42h6v6h-6z" fill="#f2f1ee" />
      </svg>

      <Ribbon />
      <div className="h-[7px] bg-[#58595b]" />

      {/* formula bar */}
      <div className="flex items-center h-[38px] bg-white border-b-2 border-[#55565a] text-[21px] text-[#222] font-['Lato',sans-serif]">
        <div className="flex items-center justify-between w-[230px] pt-[2px] pl-[92px]">
          <span>A3</span>
          <svg width="12" height="8" viewBox="0 0 12 8"><path d="M0 0h12L6 8z" fill="#111" /></svg>
        </div>
        <div className="flex items-center justify-between w-[125px] h-full ml-[10px] pl-[8px] pr-[6px] rounded-l-[18px] border-l-2 border-[#aaa] bg-linear-to-b from-[#f2f3f4] to-[#d2d4d6]">
          <div className="w-[8px] h-[12px] rounded-full bg-[#c1c3c5]" />
          <span className="font-['Liberation_Serif'] italic font-bold text-[22px] text-[#555]">fx</span>
        </div>
        <span className="flex-1 pl-[10px] pt-[2px] border-l border-[#888] h-full flex items-center">Row Labels</span>
        <div className="flex flex-col items-center justify-center w-[24px] h-full border-l border-[#999] bg-linear-to-b from-[#eee] to-[#ccc]">
          <svg width="14" height="20" viewBox="0 0 14 20"><path d="M2 2l5 5 5-5M2 12l5 5 5-5" stroke="#111" fill="none" strokeWidth="2.4" /></svg>
        </div>
      </div>
      <div className="h-[6px] bg-[#eceef0] border-b border-[#707274]" />

      {/* sheet + panel */}
      <div className="flex h-[974px]">
        <div className="flex flex-col w-[1658px]">
          <Sheet />
          <SheetTabs />
        </div>
        <VScroll />
        <FieldPanel />
      </div>
      <StatusBar />

      <div className="flex pt-[25px] font-['Open_Sans',sans-serif] text-[29.6px] text-[#8b8b8b]">
        <span className="ml-[835px]">joycekpacis.wordpress.com</span>
        <span className="ml-auto mr-[124px]">37</span>
      </div>

      {/* overlay callout */}
      <div className="absolute left-[400px] top-[561px] w-[1075px] text-center font-['DejaVu_Serif',serif] font-bold text-[96px] leading-[126px] text-[#376092] [-webkit-text-stroke:6px_#376092]">
        <div className="scale-x-[1.05] tracking-[2px]">It will list the</div>
        <div className="scale-x-[1.12] tracking-[3px] translate-x-[4px]">salesperson</div>
      </div>
      <svg width="2048" height="1536" viewBox="0 0 2048 1536" className="absolute left-0 top-0 pointer-events-none">
        <path d="M289 757L346 733L340 756L1716 1242L1703 1281L322 790L317 812Z" fill="#c3d69b" stroke="#375f8e" strokeWidth="6" />
      </svg>
    </div>
  );
}
